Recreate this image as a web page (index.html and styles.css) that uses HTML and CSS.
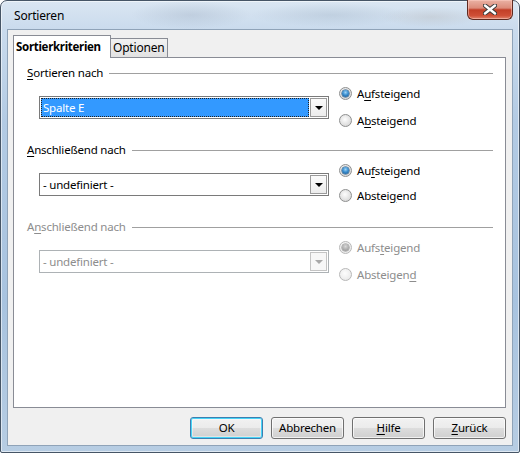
FILE: index.html
```html
<!DOCTYPE html>
<html lang="de">
<head>
<meta charset="utf-8">
<title>Sortieren</title>
<link rel="stylesheet" href="styles.css">
</head>
<body>
<div class="window">
  <div class="titlebar">
    <span class="title">Sortieren</span>
    <div class="close" aria-label="Schließen">
      <svg width="14" height="11" viewBox="0 0 14 11">
        <path d="M2 1.5 L12 9.5 M12 1.5 L2 9.5" stroke="#3a3a3a" stroke-width="4.4" stroke-linecap="round"/>
        <path d="M2 1.5 L12 9.5 M12 1.5 L2 9.5" stroke="#ffffff" stroke-width="2.4" stroke-linecap="round"/>
      </svg>
    </div>
  </div>
  <div class="client">
    <div class="tabs">
      <div class="tab active">Sortierkriterien</div>
      <div class="tab">Optionen</div>
    </div>
    <div class="panel">
      <div class="group">
        <div class="group-head"><span class="legend"><u>S</u>ortieren nach</span><span class="rule"></span></div>
        <div class="group-body">
          <div class="combo focused"><span class="value">Spalte E</span><span class="drop"><span class="arrow"></span></span></div>
          <div class="radios">
            <label class="radio"><span class="dot checked"></span><span>A<u>u</u>fsteigend</span></label>
            <label class="radio"><span class="dot"></span><span>A<u>b</u>steigend</span></label>
          </div>
        </div>
      </div>
      <div class="group">
        <div class="group-head"><span class="legend"><u>A</u>nschließend nach</span><span class="rule"></span></div>
        <div class="group-body">
          <div class="combo"><span class="value">- undefiniert -</span><span class="drop"><span class="arrow"></span></span></div>
          <div class="radios tight">
            <label class="radio"><span class="dot checked"></span><span>Au<u>f</u>steigend</span></label>
            <label class="radio"><span class="dot"></span><span>Abstei<u>g</u>end</span></label>
          </div>
        </div>
      </div>
      <div class="group disabled">
        <div class="group-head"><span class="legend">A<u>n</u>schließend nach</span><span class="rule"></span></div>
        <div class="group-body">
          <div class="combo"><span class="value">- undefiniert -</span><span class="drop"><span class="arrow"></span></span></div>
          <div class="radios">
            <label class="radio"><span class="dot checked"></span><span>Aufs<u>t</u>eigend</span></label>
            <label class="radio"><span class="dot"></span><span>Absteigen<u>d</u></span></label>
          </div>
        </div>
      </div>
    </div>
    <div class="buttons">
      <div class="btn default">OK</div>
      <div class="btn">Abbrechen</div>
      <div class="btn"><u>H</u>ilfe</div>
      <div class="btn"><u>Z</u>urück</div>
    </div>
  </div>
</div>
</body>
</html>
```

FILE: styles.css
```css
* { box-sizing: border-box; }

html, body {
  margin: 0;
  padding: 0;
  background: #ffffff;
}

body {
  font-family: "Noto Sans", "Open Sans", sans-serif;
  font-size: 11.5px;
  letter-spacing: -0.2px;
  color: #000;
}

u { text-decoration: underline; text-underline-offset: 2px; }

/* Aero window frame */
.window {
  width: 520px;
  height: 453px;
  border: 1px solid #465566;
  border-radius: 7px 7px 2px 2px;
  padding: 0 6px 6px 6px;
  display: flex;
  flex-direction: column;
  background:
    radial-gradient(ellipse 60px 14px at 190px 14px, rgba(150,165,185,0.30), transparent),
    radial-gradient(ellipse 80px 12px at 330px 14px, rgba(140,160,180,0.25), transparent),
    radial-gradient(ellipse 50px 10px at 430px 16px, rgba(160,150,140,0.20), transparent),
    linear-gradient(to bottom, #dae6f2 0px, #cadbed 28px, #b3cbe4 120px, #a8c3df 300px, #b7cde3 453px);
  box-shadow: inset 0 0 0 1px rgba(255,255,255,0.55);
}

.titlebar {
  height: 28px;
  display: flex;
  align-items: flex-start;
}

.title {
  padding: 7px 0 0 7px;
  line-height: 16px;
  font-size: 12px;
  color: #000;
}

.close {
  margin-left: auto;
  margin-top: -1px;
  width: 46px;
  height: 20px;
  border: 1px solid #5e2a20;
  border-top: none;
  border-radius: 0 0 6px 6px;
  background: linear-gradient(to bottom, #eab2a4 0%, #dc8c7a 42%, #c23f27 52%, #cf4f36 82%, #e0856d 100%);
  box-shadow: inset 0 0 0 1px rgba(255,210,200,0.5);
  display: flex;
  align-items: center;
  justify-content: center;
}

.close svg { display: block; }

.client {
  flex: 1;
  border: 1px solid #8fa3b8;
  background: #f0f0f0;
  padding: 5px 6px 0 5px;
  display: flex;
  flex-direction: column;
}

/* Tabs */
.tabs {
  height: 22px;
  display: flex;
  align-items: flex-end;
  position: relative;
  z-index: 1;
}

.tab {
  height: 19px;
  padding: 0 3px 0 2px;
  line-height: 18px;
  font-size: 12px;
  border: 1px solid #898c95;
  border-bottom: none;
  background: linear-gradient(to bottom, #f2f2f2, #e2e2e2);
  margin-left: -1px;
}

.tab.active {
  height: 23px;
  margin-left: 0;
  margin-bottom: -1px;
  width: 98px;
  padding-left: 2px;
  line-height: 21px;
  font-size: 11.5px;
  letter-spacing: -0.3px;
  font-weight: bold;
  background: #ffffff;
  position: relative;
  z-index: 2;
}

.panel {
  height: 351px;
  border: 1px solid #898c95;
  background: #ffffff;
  padding: 7px 12px 0 13px;
}

/* Groups */
.group {
  height: 77px;
}

.group-head {
  height: 16px;
  display: flex;
  align-items: center;
}

.legend {
  line-height: 16px;
  white-space: nowrap;
}

.rule {
  flex: 1;
  height: 1px;
  margin-left: 6px;
  background: #a0a0a0;
}

.group-body {
  display: flex;
  align-items: flex-start;
  padding-left: 12px;
}

.combo {
  margin-top: 15px;
  width: 290px;
  height: 23px;
  border: 1px solid #7a7a7a;
  background: #ffffff;
  display: flex;
  align-items: stretch;
  padding: 1px;
}

.combo .value {
  flex: 1;
  padding-left: 2px;
  line-height: 19px;
  white-space: nowrap;
}

.combo.focused .value {
  background: #3399ff;
  color: #ffffff;
  outline: 1px dotted #222;
  outline-offset: -1px;
  margin-right: 1px;
}

.drop {
  width: 17px;
  border: 1px solid #9a9a9a;
  background: linear-gradient(to bottom, #fbfbfb, #ececec);
  display: flex;
  align-items: center;
  justify-content: center;
}

.arrow {
  width: 0;
  height: 0;
  border-left: 4px solid transparent;
  border-right: 4px solid transparent;
  border-top: 4px solid #000;
}

.radios {
  margin-left: 10px;
  margin-top: 4px;
  display: flex;
  flex-direction: column;
  gap: 11px;
}

.radios.tight { gap: 9px; }

.radio {
  display: flex;
  align-items: center;
  height: 16px;
  gap: 5px;
  white-space: nowrap;
}

.dot {
  width: 13px;
  height: 13px;
  border-radius: 50%;
  border: 1px solid #8e8f8f;
  background: radial-gradient(circle at 45% 40%, #fdfdfd 0%, #e3e3e3 55%, #cfcfcf 100%);
  position: relative;
  flex: none;
}

.dot.checked::after {
  content: "";
  position: absolute;
  left: 2px;
  top: 2px;
  width: 7px;
  height: 7px;
  border-radius: 50%;
  background: radial-gradient(circle at 50% 35%, #9fd4f6 0%, #3b8fd0 45%, #164f86 100%);
  box-shadow: 0 0 0 0.5px #1b4a75;
}

/* Disabled group */
.group.disabled { color: #8d8d8d; }
.group.disabled .combo { border-color: #adb2b5; }
.group.disabled .drop { border-color: #c4c4c4; background: #f7f7f7; }
.group.disabled .arrow { border-top-color: #a8a8a8; }
.group.disabled .dot { border-color: #b8b8b8; background: radial-gradient(circle at 45% 40%, #fdfdfd 0%, #eeeeee 60%, #e2e2e2 100%); }
.group.disabled .dot.checked::after {
  background: radial-gradient(circle at 50% 35%, #d8d8d8 0%, #a9a9a9 60%, #8a8a8a 100%);
  box-shadow: 0 0 0 0.5px #888;
}

/* Dialog buttons */
.buttons {
  margin-top: 9px;
  display: flex;
  justify-content: flex-end;
  gap: 8px;
}

.btn {
  width: 73px;
  height: 22px;
  border: 1px solid #707070;
  border-radius: 3px;
  background: linear-gradient(to bottom, #f2f2f2 0%, #ebebeb 50%, #dddddd 51%, #cfcfcf 100%);
  box-shadow: inset 0 0 0 1px rgba(255,255,255,0.7);
  text-align: center;
  line-height: 20px;
}

.btn.default {
  border-color: #3c7fb1;
  box-shadow: inset 0 0 0 1px #48d4f7, inset 0 0 0 2px rgba(255,255,255,0.4);
}
```
